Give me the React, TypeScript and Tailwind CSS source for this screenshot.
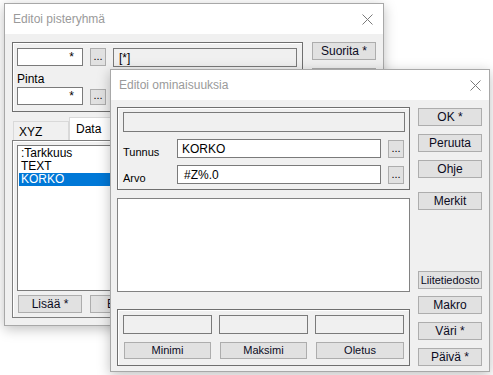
// Two overlapping Win32-style dialogs: "Editoi pisteryhmä" behind, "Editoi ominaisuuksia" on top.

const font = "font-['Liberation_Sans',Arial,sans-serif]";

function CloseX() {
  return (
    <svg width="11" height="11" viewBox="0 0 11 11" className="shrink-0">
      <path d="M0.5 0.5 L10.5 10.5 M10.5 0.5 L0.5 10.5" stroke="#7a7a7a" strokeWidth="1" fill="none" />
    </svg>
  );
}

function Btn({
  label,
  className = "",
}: {
  label?: string;
  className?: string;
}) {
  return (
    <div
      className={[
        "flex items-center justify-center bg-[#e1e1e1] border border-[#adadad] text-[11px] leading-none text-[#0b0b1e] whitespace-nowrap overflow-hidden",
        className,
      ].join(" ")}
    >
      {label}
    </div>
  );
}

function Dots({ className = "" }: { className?: string }) {
  return (
    <div
      className={[
        "w-[16px] flex items-end justify-center pb-[3px] bg-[#e1e1e1] border border-[#adadad] text-[11px] leading-none text-black",
        className,
      ].join(" ")}
    >
      ...
    </div>
  );
}

function Input({
  value,
  className = "",
  right,
}: {
  value?: string;
  className?: string;
  right?: boolean;
}) {
  return (
    <div
      className={[
        "bg-white border border-[#7a7a7a] flex items-center text-[12px] leading-none text-black",
        right ? "justify-end pr-[8px]" : "pl-[4px]",
        className,
      ].join(" ")}
    >
      {value}
    </div>
  );
}

function Group({
  className = "",
  children,
}: {
  className?: string;
  children: React.ReactNode;
}) {
  return (
    <div
      className={[
        "border border-[#6f6f6f] shadow-[inset_1px_1px_0_#ffffff]",
        className,
      ].join(" ")}
    >
      {children}
    </div>
  );
}

function Window({
  title,
  className,
  closePad,
  children,
}: {
  title: string;
  className: string;
  closePad: string;
  children: React.ReactNode;
}) {
  return (
    <div
      className={[
        "absolute flex flex-col border border-[#a8a8a8] bg-[#f0f0f0] shadow-[0_3px_12px_rgba(0,0,0,0.25)]",
        className,
      ].join(" ")}
    >
      <div className="h-[30px] shrink-0 bg-white flex items-center pl-[8px]">
        <span className="flex-1 text-[12px] text-[#9a9a9a]">{title}</span>
        <div className={closePad}>
          <CloseX />
        </div>
      </div>
      <div className="flex-1 min-h-0 overflow-hidden">{children}</div>
    </div>
  );
}

function PisteRyhma() {
  return (
    <Window
      title="Editoi pisteryhmä"
      className="left-[4px] top-[3px] w-[380px] h-[323px]"
      closePad="pr-[10px]"
    >
      <div className="flex pl-[7px] pt-[8px] gap-[9px]">
        <div className="w-[291px] flex flex-col">
          {/* top group */}
          <Group className="h-[70px] pl-[4px] pt-[5px]">
            <div className="flex items-start">
              <Input value="*" right className="w-[66px] h-[18px]" />
              <Dots className="h-[18px] ml-[7px]" />
              <div className="ml-[7px] w-[184px] h-[19px] border border-[#7a7a7a] bg-[#f0f0f0] flex items-center pl-[5px] text-[12px] leading-none text-black">
                [*]
              </div>
            </div>
            <div className="h-[20px] flex items-end pb-[2px] text-[12px] leading-none text-black">
              Pinta
            </div>
            <div className="flex items-start">
              <Input value="*" right className="w-[66px] h-[18px]" />
              <Dots className="h-[16px] ml-[7px] mt-[2px]" />
            </div>
          </Group>

          {/* tabs */}
          <div className="mt-[5px] h-[23px] flex items-end pl-[1px]">
            <div className="w-[56px] h-[19px] border border-b-0 border-[#d9d9d9] bg-[#f0f0f0] flex items-center pl-[5px] pt-[2px] text-[12px] leading-none text-black">
              XYZ
            </div>
            <div className="w-[50px] h-[23px] border border-b-0 border-[#d9d9d9] bg-white flex items-center pl-[6px] text-[12px] leading-none text-black">
              Data
            </div>
          </div>
          <div className="h-[178px] border border-[#7f7f7f] shadow-[inset_1px_1px_0_#ffffff] pl-[4px] pt-[4px]">
            <div className="h-[146px] bg-white border border-[#7a7a7a] pt-[1px] pl-[1px] text-[12px] text-black">
              <div className="h-[13px] leading-[13px] pl-[2px]">:Tarkkuus</div>
              <div className="h-[13px] leading-[13px] pl-[2px]">TEXT</div>
              <div className="h-[13px] leading-[13px] pl-[2px] bg-[#0078d7] text-white">KORKO</div>
            </div>
            <div className="flex mt-[4px] gap-[8px] pl-[1px]">
              <Btn label="Lisää *" className="w-[64px] h-[18px] text-[12px]" />
              <Btn label="Editoi" className="w-[64px] h-[18px] text-[12px]" />
            </div>
          </div>
        </div>

        <div className="flex flex-col w-[64px]">
          <Btn label="Suorita *" className="h-[18px] text-[12px]" />
          <Btn label="" className="h-[18px] mt-[8px]" />
        </div>
      </div>
    </Window>
  );
}

function Ominaisuudet() {
  return (
    <Window
      title="Editoi ominaisuuksia"
      className="left-[110px] top-[69px] w-[380px] h-[303px]"
      closePad="pr-[8px]"
    >
      <div className="flex pl-[6px] gap-[8px]">
        <div className="w-[293px] flex flex-col pt-[7px]">
          <Group className="h-[83px] pl-[5px] pr-[4px] pt-[4px]">
            <div className="h-[20px] border border-[#7a7a7a] bg-[#f0f0f0]" />
            <div className="flex items-start mt-[7px]">
              <span className="w-[54px] h-[19px] flex items-end text-[11px] leading-none text-black">
                Tunnus
              </span>
              <Input value="KORKO" className="w-[204px] h-[19px]" />
              <Dots className="h-[18px] ml-[7px] mt-[1px]" />
            </div>
            <div className="flex items-start mt-[7px]">
              <span className="w-[54px] h-[19px] flex items-end text-[11px] leading-none text-black">
                Arvo
              </span>
              <Input value="#Z%.0" className="w-[204px] h-[19px] pl-[6px]" />
              <Dots className="h-[18px] ml-[7px] mt-[1px]" />
            </div>
          </Group>

          <div className="mt-[8px] h-[94px] bg-white border border-[#828282]" />

          <Group className="mt-[17px] h-[57px] pl-[5px] pt-[5px]">
            <div className="flex gap-[7px]">
              <div className="w-[89px] h-[19px] border border-[#7a7a7a] bg-[#f0f0f0]" />
              <div className="w-[89px] h-[19px] border border-[#7a7a7a] bg-[#f0f0f0]" />
              <div className="w-[89px] h-[19px] border border-[#7a7a7a] bg-[#f0f0f0]" />
            </div>
            <div className="flex gap-[9px] mt-[8px] pl-[1px]">
              <Btn label="Minimi" className="w-[87px] h-[17px]" />
              <Btn label="Maksimi" className="w-[87px] h-[17px]" />
              <Btn label="Oletus" className="w-[88px] h-[17px]" />
            </div>
          </Group>
        </div>

        <div className="w-[64px] flex flex-col">
          <Btn label="OK *" className="h-[18px] mt-[8px] text-[12px]" />
          <Btn label="Peruuta" className="h-[18px] mt-[8px] text-[12px]" />
          <Btn label="Ohje" className="h-[18px] mt-[8px] text-[12px]" />
          <Btn label="Merkit" className="h-[18px] mt-[14px] text-[12px]" />
          <Btn label="Liitetiedosto" className="h-[18px] mt-[61px] text-[11px]" />
          <Btn label="Makro" className="h-[18px] mt-[7px] text-[12px]" />
          <Btn label="Väri *" className="h-[18px] mt-[8px] text-[12px]" />
          <Btn label="Päivä *" className="h-[18px] mt-[8px] text-[12px]" />
        </div>
      </div>
    </Window>
  );
}

export default function App() {
  return (
    <div className={`relative w-[493px] h-[375px] bg-white overflow-hidden ${font}`}>
      <PisteRyhma />
      <Ominaisuudet />
    </div>
  );
}
